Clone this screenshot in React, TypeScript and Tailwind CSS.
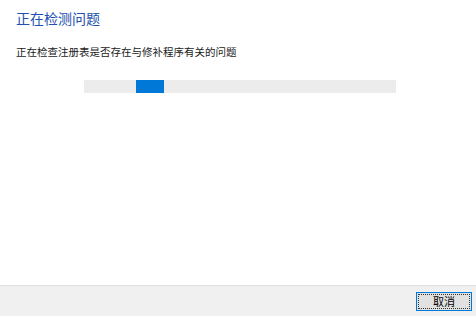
import React from 'react';

const App: React.FC = () => {
  return (
    <div
      className="w-[476px] h-[316px] flex flex-col bg-white overflow-hidden"
      style={{ fontFamily: '"Noto Sans CJK SC", "Noto Sans", sans-serif' }}
    >
      {/* Content */}
      <div className="flex-1 flex flex-col px-4">
        <h1 className="mt-[8px] text-[14px] leading-[20px] text-[#2150b0]">正在检测问题</h1>
        <p className="mt-[17px] text-[10.5px] leading-[14px] text-[#1a1a1a]">
          正在检查注册表是否存在与修补程序有关的问题
        </p>
        <div className="mt-[21px] ml-[68px] w-[312px] h-[13px] bg-[#ececec] flex">
          <div className="ml-[52px] w-[28px] h-full bg-[#0078d7]" />
        </div>
      </div>

      {/* Footer */}
      <div className="h-[31px] bg-[#f0f0f0] border-t border-[#dfdfdf] flex items-center justify-end pr-[4px]">
        <button className="w-[56px] h-[19px] border border-[#0078d7] bg-[#e1e1e1] p-[1px]">
          <div className="w-full h-full border border-dotted border-[#333] flex items-center justify-center text-[11px] leading-none text-black">
            取消
          </div>
        </button>
      </div>
    </div>
  );
};

export default App;
